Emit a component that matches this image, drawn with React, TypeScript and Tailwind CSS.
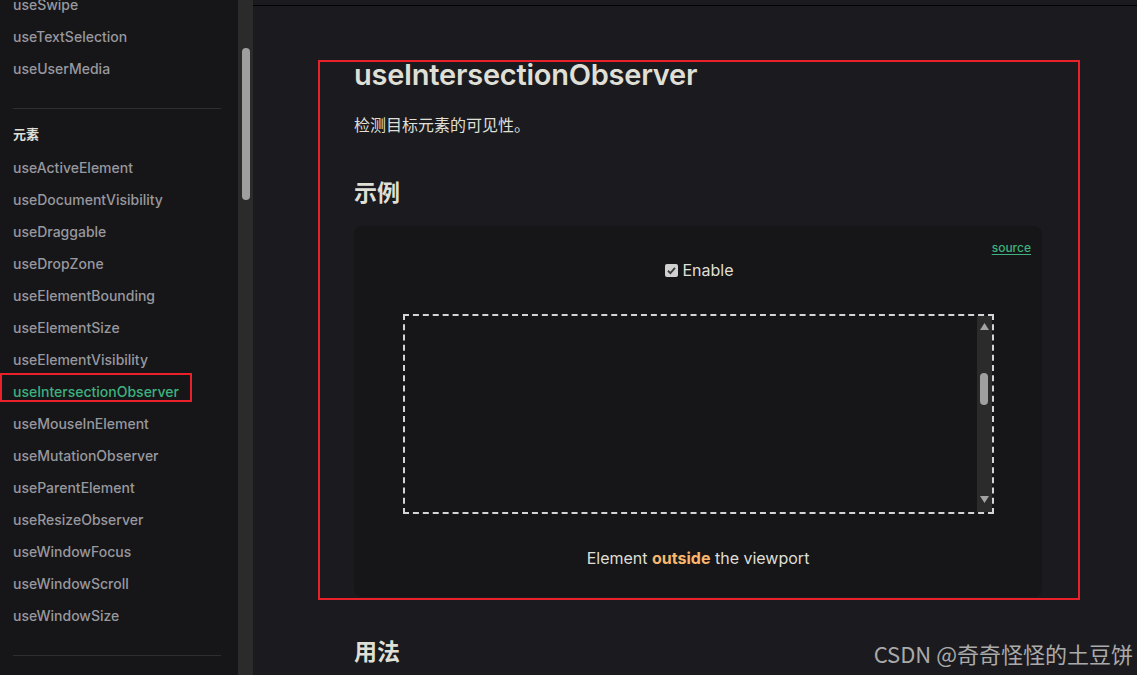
import React from "react";

const font = { fontFamily: 'Inter, "Noto Sans CJK SC", sans-serif' };

const groupA = ["useSwipe", "useTextSelection", "useUserMedia"];
const groupB = [
  "useActiveElement",
  "useDocumentVisibility",
  "useDraggable",
  "useDropZone",
  "useElementBounding",
  "useElementSize",
  "useElementVisibility",
  "useIntersectionObserver",
  "useMouseInElement",
  "useMutationObserver",
  "useParentElement",
  "useResizeObserver",
  "useWindowFocus",
  "useWindowScroll",
  "useWindowSize",
];

function Item({ name }: { name: string }) {
  const active = name === "useIntersectionObserver";
  return (
    <div
      className={
        "h-8 flex items-center text-[14px] font-medium " +
        (active ? "text-[#3eb17f]" : "text-[#98989f]")
      }
    >
      {name}
    </div>
  );
}

export default function App() {
  return (
    <div
      className="relative w-[1137px] h-[675px] overflow-hidden flex bg-[#1b1b1f]"
      style={font}
    >
      {/* Sidebar */}
      <div className="w-[238px] h-full bg-[#161618] overflow-hidden">
        <div className="pl-[13px] pr-[17px] -mt-[12px]">
          {groupA.map((n) => (
            <Item key={n} name={n} />
          ))}
          <div className="mt-[24px] border-t border-[#2e2e32] pt-[10px]" />
          <div className="h-8 flex items-center text-[13px] font-bold text-[#dfdfd6]">
            元素
          </div>
          {groupB.map((n) => (
            <Item key={n} name={n} />
          ))}
          <div className="mt-[24px] border-t border-[#2e2e32]" />
        </div>
      </div>
      {/* Sidebar scrollbar */}
      <div className="w-[15px] h-full bg-[#2b2b2b] flex flex-col items-center pt-[48px]">
        <div className="w-[8px] h-[152px] rounded-full bg-[#9f9f9f]" />
      </div>

      {/* Main */}
      <div className="flex-1 h-full flex flex-col">
        <div className="h-[6px] border-b border-black shrink-0" />
        <div className="pl-[101px] pt-[49px] w-[789px]">
          <h1 className="text-[29px] leading-[40px] font-semibold text-[#dfdfd6] tracking-[-0.25px]">
            useIntersectionObserver
          </h1>
          <p className="mt-[18px] text-[16px] leading-[24px] text-[#dfdfd6]">
            检测目标元素的可见性。
          </p>
          <h2 className="mt-[40px] text-[23px] leading-[32px] font-bold text-[#dfdfd6]">
            示例
          </h2>
          {/* Demo */}
          <div className="relative mt-[17px] w-[688px] bg-[#161618] rounded-[8px] pt-[32px] pb-[27px] flex flex-col items-center">
            <a className="absolute right-[11px] top-[14px] text-[12px] leading-[16px] text-[#3eb17f] underline underline-offset-2 font-medium">
              source
            </a>
            <label className="flex items-center h-[24px] text-[16px] text-[#dfdfd6] pl-[3px]">
              <span className="w-[13px] h-[13px] rounded-[2px] bg-[#d0d0d0] flex items-center justify-center mr-[4px]">
                <svg width="11" height="11" viewBox="0 0 12 12">
                  <path
                    d="M2.2 6.3 L4.8 8.8 L9.8 3.2"
                    fill="none"
                    stroke="#3b3b3b"
                    strokeWidth="2"
                  />
                </svg>
              </span>
              Enable
            </label>
            <div className="mt-[32px] w-[591px] h-[200px] border-2 border-dashed border-[#d4d4d4] flex">
              <div className="flex-1" />
              <div className="w-[15px] bg-[#2b2b2b] flex flex-col items-center pt-[7px] pb-[9px]">
                <svg width="9" height="7" viewBox="0 0 9 7">
                  <path d="M4.5 0 L9 7 L0 7 Z" fill="#a3a3a3" />
                </svg>
                <div className="mt-[43px] w-[8px] h-[32px] rounded-full bg-[#9f9f9f]" />
                <div className="flex-1" />
                <svg width="9" height="7" viewBox="0 0 9 7">
                  <path d="M0 0 L9 0 L4.5 7 Z" fill="#a3a3a3" />
                </svg>
              </div>
            </div>
            <div className="mt-[32px] h-[24px] flex items-center text-[16px] text-[#dfdfd6]">
              Element&nbsp;
              <span className="font-bold text-[#f9b66d]">outside</span>
              &nbsp;the viewport
            </div>
          </div>
          <h2 className="mt-[39px] text-[23px] leading-[32px] font-bold text-[#dfdfd6]">
            用法
          </h2>
        </div>
      </div>

      {/* Red annotation boxes */}
      <div className="absolute left-[318px] top-[60px] w-[762px] h-[540px] border-2 border-[#e8212b]" />
      <div className="absolute left-0 top-[373px] w-[192px] h-[29px] border-2 border-[#e8212b]" />

      {/* Watermark */}
      <div
        className="absolute right-[4px] top-[639px] text-[22px] leading-[28px] text-[#aaaaaa]"
        style={{ fontFamily: '"Noto Sans CJK SC", "Liberation Sans", sans-serif' }}
      >
        CSDN @奇奇怪怪的土豆饼
      </div>
    </div>
  );
}
